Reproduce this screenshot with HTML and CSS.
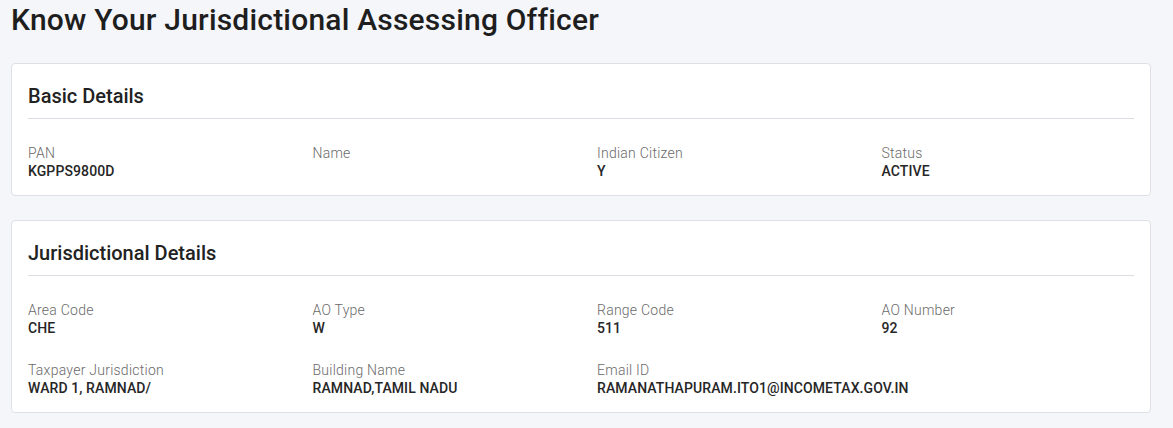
FILE: index.html
```html
<!DOCTYPE html>
<html lang="en">
<head>
<meta charset="utf-8">
<title>Know Your Jurisdictional Assessing Officer</title>
<link rel="stylesheet" href="styles.css">
</head>
<body>
<main class="page">
  <h1 class="page-title">Know Your Jurisdictional Assessing Officer</h1>

  <section class="card">
    <h2 class="card-title">Basic Details</h2>
    <div class="fields">
      <div class="field"><div class="label">PAN</div><div class="value">KGPPS9800D</div></div>
      <div class="field"><div class="label">Name</div><div class="value"></div></div>
      <div class="field"><div class="label">Indian Citizen</div><div class="value">Y</div></div>
      <div class="field"><div class="label">Status</div><div class="value">ACTIVE</div></div>
    </div>
  </section>

  <section class="card">
    <h2 class="card-title">Jurisdictional Details</h2>
    <div class="fields">
      <div class="field"><div class="label">Area Code</div><div class="value">CHE</div></div>
      <div class="field"><div class="label">AO Type</div><div class="value">W</div></div>
      <div class="field"><div class="label">Range Code</div><div class="value">511</div></div>
      <div class="field"><div class="label">AO Number</div><div class="value">92</div></div>
      <div class="field"><div class="label">Taxpayer Jurisdiction</div><div class="value">WARD 1, RAMNAD/</div></div>
      <div class="field"><div class="label">Building Name</div><div class="value">RAMNAD,TAMIL NADU</div></div>
      <div class="field"><div class="label">Email ID</div><div class="value">RAMANATHAPURAM.ITO1@INCOMETAX.GOV.IN</div></div>
    </div>
  </section>
</main>
</body>
</html>
```

FILE: styles.css
```css
html, body {
  margin: 0;
  padding: 0;
  background: #f5f6fa;
  font-family: Roboto, "Liberation Sans", Arial, sans-serif;
  color: #1f1f1f;
}

.page {
  padding: 0 22px 0 11px;
}

.page-title {
  margin: 2px 0 26px;
  font-size: 30px;
  line-height: 35px;
  font-weight: 500;
  letter-spacing: 0.2px;
  color: #1e1e1e;
}

.card {
  background: #ffffff;
  border: 1px solid #dfe0e7;
  border-radius: 4px;
  margin-bottom: 24px;
  padding: 20px 0 15px;
}

.card-title {
  margin: 0 16px;
  padding-bottom: 10px;
  border-bottom: 1px solid #dcdde2;
  font-size: 20px;
  line-height: 24px;
  font-weight: 500;
  color: #222;
}

.fields {
  display: grid;
  grid-template-columns: repeat(4, minmax(0, 1fr));
  row-gap: 24px;
  padding-top: 25px;
}

.field {
  padding: 0 16px;
  font-size: 14px;
  line-height: 18px;
  white-space: nowrap;
}

.label {
  color: #6a6a6a;
  font-weight: 300;
  letter-spacing: 0.25px;
}

.value {
  color: #262626;
  font-weight: 500;
  letter-spacing: 0.1px;
  min-height: 18px;
}
```
